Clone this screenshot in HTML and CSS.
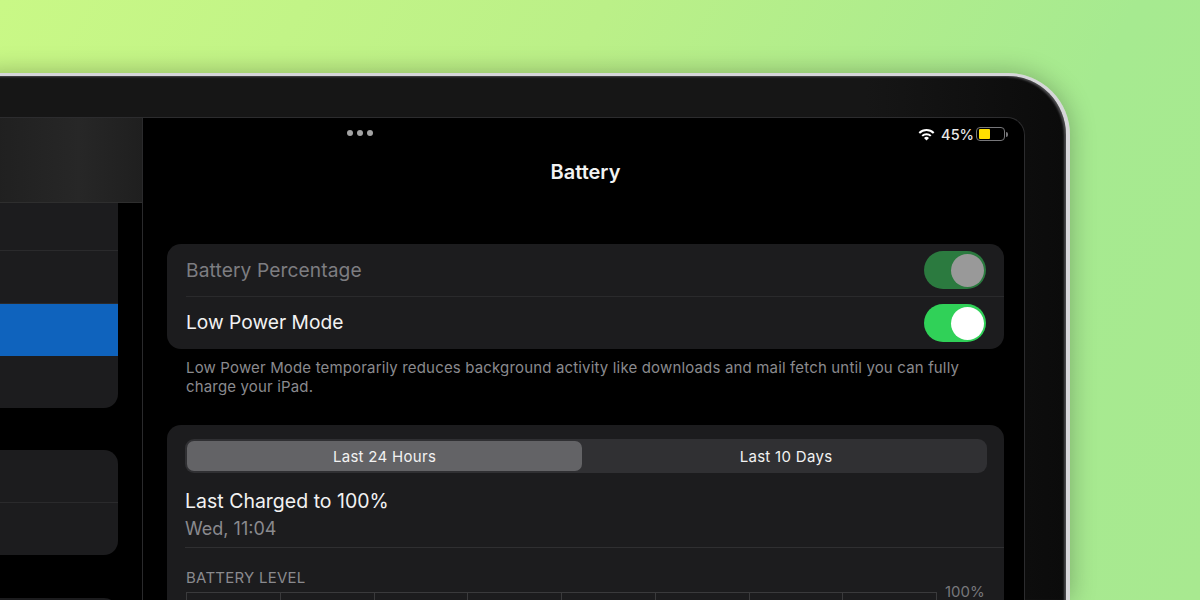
FILE: index.html
```html
<!DOCTYPE html>
<html lang="en">
  <head>
    <meta charset="UTF-8" />
    <meta name="viewport" content="width=device-width, initial-scale=1.0" />
    <title>Battery</title>
    <link rel="stylesheet" href="styles.css">
  </head>
  <body>
    <div class="device">
      <div class="screen">
        <div class="sidebar">
          <div class="sidebarHeader"></div>
          <div class="sideList firstList">
            <div class="sideRow cutRow"></div>
            <div class="sideRow"></div>
            <div class="sideRow active"></div>
            <div class="sideRow"></div>
          </div>
          <div class="sideList secondList">
            <div class="sideRow"></div>
            <div class="sideRow"></div>
          </div>
          <div class="sideList thirdList">
            <div class="sideRow"></div>
          </div>
        </div>

        <div class="main">
          <div class="statusBar">
            <div class="dots"><span></span><span></span><span></span></div>
            <div class="status">
              <svg class="wifi" width="17" height="13" viewBox="0 0 17 13">
                <path d="M1.300 5a10.200 10.200 0 0 1 14.400 0" fill="none" stroke="#fff" stroke-width="2"/>
                <path d="M4.200 7.900a6.100 6.100 0 0 1 8.600 0" fill="none" stroke="#fff" stroke-width="2"/>
                <path d="M6 9.900a3.600 3.600 0 0 1 5 0L8.500 12.600z" fill="#fff"/>
              </svg>
              <span class="percent">45%</span>
              <div class="batteryIcon"><div class="batteryFill"></div></div>
              <div class="batteryCap"></div>
            </div>
          </div>

          <h1 class="title">Battery</h1>

          <div class="card">
            <div class="row">
              <span class="rowLabel dim">Battery Percentage</span>
              <div class="toggle disabled"><div class="knob"></div></div>
            </div>
            <div class="row">
              <span class="rowLabel">Low Power Mode</span>
              <div class="toggle"><div class="knob"></div></div>
            </div>
          </div>
          <p class="note">Low Power Mode temporarily reduces background activity like downloads and mail fetch until you can fully charge your iPad.</p>

          <div class="card usage">
            <div class="segmented">
              <div class="segment selected">Last 24 Hours</div>
              <div class="segment">Last 10 Days</div>
            </div>
            <div class="charged">
              <div class="chargedTitle">Last Charged to 100%</div>
              <div class="chargedTime">Wed, 11:04</div>
            </div>
            <div class="level">
              <div class="levelTitle">BATTERY LEVEL</div>
              <div class="chartWrap">
                <div class="chart">
                  <span></span><span></span><span></span><span></span>
                  <span></span><span></span><span></span><span></span>
                </div>
                <div class="axis">100%</div>
              </div>
            </div>
          </div>
        </div>
      </div>
    </div>
  </body>
</html>
```

FILE: styles.css
```css
html, body {
  height: 100%;
}
body {
  margin: 0;
  overflow: hidden;
  font-family: Inter, "Liberation Sans", sans-serif;
  background: linear-gradient(118deg, #c9f886 0%, #bbf088 40%, #a6ea90 75%, #a8e990 100%);
}

.device {
  box-sizing: border-box;
  width: 1130px;
  height: 527px;
  margin: 73px 0 0 -60px;
  padding: 41px 41px 0 40px;
  background: linear-gradient(to left, #0b0b0b 0, #0d0d0d 40px, #161616 200px);
  border: solid #d6d6d9;
  border-width: 3px 4px 0 4px;
  border-radius: 62px 62px 0 0;
  box-shadow: 0 0 26px rgba(0, 0, 0, 0.28), inset -2px 1px 2px #4a4a4c;
}
.screen {
  display: flex;
  height: 100%;
  background-color: #000;
  border: 1px solid #2c2c2e;
  border-bottom: 0;
  border-radius: 18px 18px 0 0;
  overflow: hidden;
}

.sidebar {
  box-sizing: border-box;
  flex: 0 0 158px;
  border-right: 1px solid #2a2a2c;
}
.sidebarHeader {
  height: 84px;
  background: linear-gradient(to right, #1f1f1f, #272727 60%, #1f1f1f);
  border-bottom: 1px solid #2e2e2e;
}
.sideList {
  width: 133px;
  background-color: #1c1c1e;
  border-radius: 0 14px 14px 0;
  overflow: hidden;
}
.firstList {
  border-radius: 0 0 14px 0;
}
.secondList {
  margin-top: 42px;
}
.thirdList {
  margin-top: 43px;
}
.sideRow {
  box-sizing: border-box;
  height: 53px;
  border-bottom: 1px solid #2a2a2c;
}
.sideRow:last-child {
  height: 52px;
  border-bottom: 0;
}
.cutRow {
  height: 48px;
}
.sideRow.active {
  height: 52px;
  background-color: #0f63bd;
  border-bottom: 0;
}

.main {
  flex: 1;
  box-sizing: border-box;
  padding: 0 20px 0 24px;
}
.statusBar {
  display: flex;
  justify-content: space-between;
  align-items: center;
  height: 32px;
  margin-right: -4px;
}
.dots {
  display: flex;
  gap: 4px;
  margin: -3px 0 0 180px;
}
.dots span {
  width: 6px;
  height: 6px;
  border-radius: 50%;
  background-color: #a3a3a3;
}
.status {
  display: flex;
  align-items: center;
  color: #e8e8e8;
}
.percent {
  margin: 0 2px 0 6px;
  font-size: 14.500px;
  font-weight: 500;
}
.batteryIcon {
  box-sizing: border-box;
  width: 29px;
  height: 14px;
  padding: 1px 2px;
  border: 1px solid #77777a;
  border-radius: 4px;
}
.batteryFill {
  width: 11px;
  height: 10px;
  background-color: #ffdf00;
  border-radius: 1px;
}
.batteryCap {
  width: 2px;
  height: 5px;
  margin-left: 1px;
  background-color: #77777a;
  border-radius: 0 2px 2px 0;
}

.title {
  margin: 0;
  height: 94px;
  padding-top: 10px;
  box-sizing: border-box;
  font-size: 20px;
  line-height: 24px;
  font-weight: 600;
  text-align: center;
  color: #f2f2f2;
}

.card {
  background-color: #1c1c1e;
  border-radius: 14px;
}
.row {
  box-sizing: border-box;
  display: flex;
  justify-content: space-between;
  align-items: center;
  height: 52px;
  padding: 0 18px 0 19px;
}
.row + .row {
  border-top: 1px solid #2a2a2c;
  height: 53px;
  margin-left: 19px;
  padding-left: 0;
}
.row + .row .rowLabel {
  margin-bottom: 2px;
}
.rowLabel {
  font-size: 19.200px;
  color: #f2f2f2;
}
.rowLabel.dim {
  color: #7d7d81;
  letter-spacing: 0.1px;
}
.toggle {
  box-sizing: border-box;
  display: flex;
  justify-content: flex-end;
  align-items: center;
  width: 62px;
  height: 38px;
  padding-right: 2px;
  background-color: #30d158;
  border-radius: 19px;
}
.toggle.disabled {
  background-color: #2b7a3f;
}
.knob {
  width: 33px;
  height: 33px;
  border-radius: 50%;
  background-color: #fff;
}
.toggle.disabled .knob {
  background-color: #999;
}

.note {
  margin: 9px 0 0;
  padding: 0 19px;
  font-size: 15px;
  line-height: 19px;
  color: #8a8a8e;
  letter-spacing: 0.160px;
}
.usage {
  margin-top: 29px;
  padding: 14px 0 0 18px;
}
.segmented {
  display: flex;
  box-sizing: border-box;
  width: 802px;
  height: 34px;
  padding: 2px;
  background-color: #303033;
  border-radius: 9px;
}
.segment {
  flex: 1;
  padding-left: 5px;
  display: flex;
  justify-content: center;
  align-items: center;
  font-size: 15px;
  font-weight: 400;
  letter-spacing: 0.300px;
  color: #f2f2f2;
}
.segment.selected {
  flex: 0 0 395px;
  padding-left: 0;
  background-color: #636366;
  border-radius: 7px;
}
.charged {
  height: 75px;
  padding-top: 16px;
  box-sizing: border-box;
  border-bottom: 1px solid #2f2f31;
}
.chargedTitle {
  font-size: 19.500px;
  line-height: 24px;
  color: #f2f2f2;
}
.chargedTime {
  margin-top: 5px;
  font-size: 18px;
  line-height: 22px;
  color: #8a8a8e;
}
.level {
  padding: 21px 0 0 1px;
}
.levelTitle {
  font-size: 15px;
  line-height: 18px;
  letter-spacing: 0.250px;
  color: #8a8a8e;
}
.chartWrap {
  display: flex;
  margin-top: 5px;
}
.chart {
  display: flex;
  width: 751px;
  height: 40px;
  border-top: 1px solid #3a3a3c;
}
.chart span {
  flex: 1;
  border-left: 1px solid #3a3a3c;
}
.chart span:last-child {
  border-right: 1px solid #3a3a3c;
}
.axis {
  margin: -7px 0 0 8px;
  font-size: 15px;
  line-height: 14px;
  color: #77777b;
}
```
